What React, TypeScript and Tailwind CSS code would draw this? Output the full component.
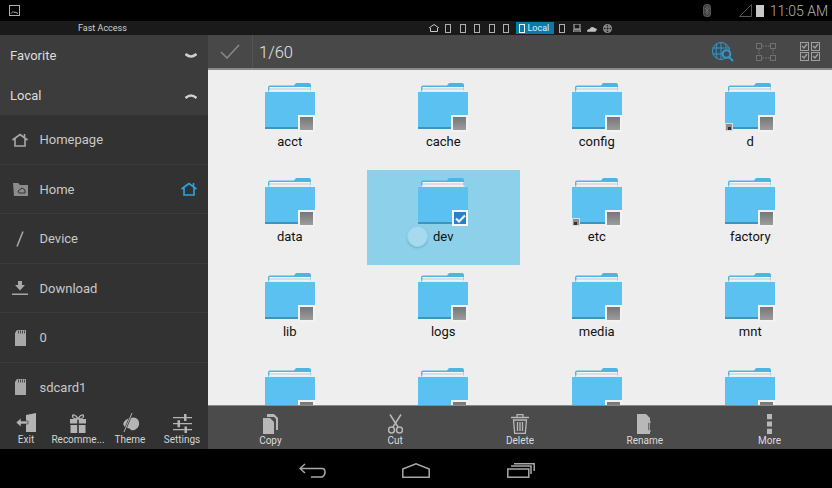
import React from 'react';

const font = { fontFamily: 'Roboto, "Liberation Sans", sans-serif' };

function FolderIcon({ selected, link }: { selected?: boolean; link?: boolean }) {
    return (
        <div className="relative w-[50px] h-[50px]">
            <svg width="50" height="47" viewBox="0 0 50 47">
                <path d="M3 12V5.500q0-2 2-2h24l2-2.500h13q2 0 2 2v9.500z" fill="#4fb4e0" />
                <rect x="4.500" y="5" width="41" height="4" fill="#f6f8f8" />
                <rect x="4.500" y="6.500" width="41" height="1" fill="#b9c6cc" />
                <rect x="3.500" y="8.500" width="43" height="1.500" fill="#e8eeee" />
                <path d="M0 10h50v35a1 1 0 0 1-1 1H1a1 1 0 0 1-1-1z" fill="#5ac1f0" />
                <rect x="0" y="45" width="50" height="2" fill="#3d94bd" />
            </svg>
            {selected ? (
                <div className="absolute right-0 bottom-[1px] w-[16px] h-[16px] border-2 border-[#f4f8fa] bg-[#2c7fcf] flex items-center justify-center">
                    <svg width="11" height="9" viewBox="0 0 11 9">
                        <path d="M1 4.500l3 3 6-6" stroke="#e8f2fa" strokeWidth="2.200" fill="none" />
                    </svg>
                </div>
            ) : (
                <div className="absolute right-0 bottom-0 w-[17px] h-[17px] border-2 border-[#f2f2f2] bg-gradient-to-b from-[#777777] to-[#9c9c9c]" />
            )}
            {link && (
                <div className="absolute left-0 bottom-[1px] w-[8px] h-[8px] bg-[#8f8f8f] border border-[#dddddd] flex items-end justify-center">
                    <div className="w-[3px] h-[3px] bg-[#333333]" />
                </div>
            )}
        </div>
    );
}

// the last row is cut by the toolbar, so it has no visible names
const files: { name: string; link?: boolean; selected?: boolean }[] = [
    { name: 'acct' },
    { name: 'cache' },
    { name: 'config' },
    { name: 'd', link: true },
    { name: 'data' },
    { name: 'dev', selected: true },
    { name: 'etc', link: true },
    { name: 'factory' },
    { name: 'lib' },
    { name: 'logs' },
    { name: 'media' },
    { name: 'mnt' },
    { name: '' },
    { name: '' },
    { name: '' },
    { name: '' },
];

function HouseIcon({ color = '#a8a8a8' }: { color?: string }) {
    return (
        <svg width="16" height="14" viewBox="0 0 16 14" fill="none" stroke={color} strokeWidth="1.6">
            <path d="M0.5 7L8 1.5 15.5 7M3 6v7h10V6M12.5 1v3" />
        </svg>
    );
}

function SdIcon() {
    return (
        <svg width="11" height="16" viewBox="0 0 11 16">
            <path d="M2 0h9v16H0V3z" fill="#a8a8a8" />
            <path d="M3.500 0.500v3M5.500 0.500v3M7.500 0.500v3M9.500 0.500v3" stroke="#333" strokeWidth="0.8" />
        </svg>
    );
}

const navItems: { label: string; icon: React.ReactNode; extra?: boolean }[] = [
    { label: 'Homepage', icon: <HouseIcon /> },
    {
        label: 'Home',
        extra: true,
        icon: (
            <svg width="15" height="13" viewBox="0 0 15 13">
                <path d="M0 0h5l2 2h8v11H1z" fill="#8c8c8c" />
                <path d="M5 8l4-3 3 2v3H6z" fill="none" stroke="#333" strokeWidth="1" />
            </svg>
        ),
    },
    {
        label: 'Device',
        icon: (
            <svg width="10" height="16" viewBox="0 0 10 16">
                <path d="M8 0.5L2 15.5" stroke="#a8a8a8" strokeWidth="1.5" />
            </svg>
        ),
    },
    {
        label: 'Download',
        icon: (
            <svg width="16" height="14" viewBox="0 0 16 14">
                <path d="M6 0h4v4h3L8 9.5 3 4h3zM0 12.500h16V14H0z" fill="#a8a8a8" />
            </svg>
        ),
    },
    { label: '0', icon: <SdIcon /> },
    { label: 'sdcard1', icon: <SdIcon /> },
];

const sideActions: { label: string; icon: React.ReactNode }[] = [
    {
        label: 'Exit',
        icon: (
            <svg width="21" height="20" viewBox="0 0 21 20">
                <path d="M10 2l10-2v19H10z" fill="#b4b4b4" />
                <path d="M0 9.500L5 5v3h7v3H5v3z" fill="#b4b4b4" stroke="#333" strokeWidth="0.6" />
            </svg>
        ),
    },
    {
        label: 'Recomme...',
        icon: (
            <svg width="18" height="20" viewBox="0 0 18 20">
                <path d="M1 6h7.200v4.500H1zM9.800 6H17v4.500H9.800zM1.500 12h6.700v8H1.500zM9.800 12h6.700v8H9.800z" fill="#b4b4b4" />
                <path d="M9 6C6 0.500 2 1 4 4.500 5 6 9 6 9 6c3-5.500 7-5 5-1.500C13 6 9 6 9 6z" fill="none" stroke="#b4b4b4" strokeWidth="1.3" />
            </svg>
        ),
    },
    {
        label: 'Theme',
        icon: (
            <svg width="19" height="20" viewBox="0 0 19 20">
                <path d="M9 5c6-2 10 2 9 7-1 4-5 6-8 5-1-2-4-2-6-3-4-3 0-8 5-9z" fill="#b4b4b4" />
                <path d="M11 0L3 19" stroke="#333" strokeWidth="2.2" />
                <path d="M11 0L3 19" stroke="#b4b4b4" strokeWidth="1" />
            </svg>
        ),
    },
    {
        label: 'Settings',
        icon: (
            <svg width="19" height="19" viewBox="0 0 19 19" fill="#b4b4b4">
                <path d="M0 3h19v1.300H0zM0 9h19v1.300H0zM0 15h19v1.300H0z" />
                <path d="M11 0h2.500v7H11zM4.500 6.200H7v7H4.500zM11.500 12.500H14V19h-2.500z" />
            </svg>
        ),
    },
];

const mainActions: { label: string; icon: React.ReactNode }[] = [
    {
        label: 'Copy',
        icon: (
            <svg width="15" height="20" viewBox="0 0 15 20" fill="#b8b8b8">
                <path d="M4 0h7l4 4v12h-2V5l-2-2H4z" />
                <path d="M0 4h7l4 4v12H0z" />
            </svg>
        ),
    },
    {
        label: 'Cut',
        icon: (
            <svg width="15" height="20" viewBox="0 0 15 20" fill="none" stroke="#b8b8b8" strokeWidth="1.5">
                <path d="M2 0.500L10 13M13 0.500L5 13" />
                <circle cx="3.500" cy="16" r="3" />
                <circle cx="11.500" cy="16" r="3" />
            </svg>
        ),
    },
    {
        label: 'Delete',
        icon: (
            <svg width="18" height="20" viewBox="0 0 18 20" fill="none" stroke="#b8b8b8" strokeWidth="1.3">
                <path d="M0 3.500h18M6 3V0.700h6V3" />
                <path d="M2.500 6h13l-1.200 13.400H3.700zM6.500 8v9M9 8v9M11.500 8v9" />
            </svg>
        ),
    },
    {
        label: 'Rename',
        icon: (
            <svg width="15" height="20" viewBox="0 0 15 20">
                <path d="M0 0h9l4 4v4.500H11v8h2V20H0z" fill="#b8b8b8" />
                <path d="M10.500 8h3.500M10.500 17h3.500M12.200 8v9" stroke="#b8b8b8" strokeWidth="1.1" />
            </svg>
        ),
    },
    {
        label: 'More',
        icon: (
            <svg width="5" height="20" viewBox="0 0 5 20" fill="#b8b8b8">
                <path d="M0 0h5v5.200H0zM0 7.400h5v5.200H0zM0 14.800h5V20H0z" />
            </svg>
        ),
    },
];

function TabRect({ light }: { light?: boolean }) {
    return <div className={`w-[6px] h-[9px] border ${light ? 'border-white' : 'border-[#b0b0b0]'}`} />;
}

function CheckBoxes() {
    return (
        <svg width="20" height="19" viewBox="0 0 20 19" fill="none" stroke="#a0a0a0" strokeWidth="1">
            <rect x="0.500" y="0.500" width="8" height="8" />
            <rect x="11.500" y="0.500" width="8" height="8" />
            <rect x="0.500" y="10.500" width="8" height="8" />
            <rect x="11.500" y="10.500" width="8" height="8" />
            <path d="M2 4l2 2 3-4M13 4l2 2 3-4M2 14l2 2 3-4M13 14l2 2 3-4" strokeWidth="1.3" />
        </svg>
    );
}

export default function App() {
    return (
        <div className="w-[832px] h-[488px] flex flex-col bg-black overflow-hidden" style={font}>
            {/* status bar */}
            <div className="h-[21px] shrink-0 flex items-center pl-[9px] pr-[4px] text-[#b4b4b4]">
                <svg width="12" height="12" viewBox="0 0 12 12" fill="none" stroke="#b0b0b0">
                    <rect x="0.500" y="0.500" width="10" height="10" />
                    <path d="M2 8.500l2-2 1 1 1-.5 3 1.500" />
                </svg>
                <svg className="ml-auto" width="8" height="13" viewBox="0 0 8 13" fill="none" stroke="#555" strokeWidth="1.2">
                    <rect x="0.600" y="0.600" width="6.800" height="11.800" rx="3" fill="#3c3c3c" />
                    <path d="M2 4l4 4.500L4 10.500V2.500L6 4.500 2 9" stroke="#777" strokeWidth="0.8" />
                </svg>
                <svg className="ml-[28px]" width="13" height="13" viewBox="0 0 13 13">
                    <path d="M12.500 0.500v12H0.500z" fill="none" stroke="#555" />
                </svg>
                <div className="ml-[4px] w-[8px] h-[12px] bg-[#c8c8c8]" />
                <span className="ml-[6px] text-[14px] font-light leading-none">11:05 AM</span>
            </div>

            {/* fast access */}
            <div className="h-[14px] shrink-0 bg-[#1a1a1a] flex items-center text-[#d0d0d0]">
                <span className="ml-[78px] text-[9px] leading-none w-[351px]">Fast Access</span>
                <svg width="10" height="8" viewBox="0 0 10 8" fill="none" stroke="#c8c8c8">
                    <path d="M0 4l5-3.500L10 4M1.500 4v3.500h7V4" />
                </svg>
                <div className="ml-[6px] flex items-center gap-[8.500px]">
                    <TabRect />
                    <TabRect />
                    <TabRect />
                    <TabRect />
                    <TabRect />
                </div>
                <div className="ml-[6.500px] h-[12px] w-[38px] bg-[#0a7ba6] flex items-center pl-[3px] gap-[3px] text-[9px] leading-none text-[#e0f0f8]">
                    <TabRect light />
                    Local
                </div>
                <div className="ml-[5px]">
                    <TabRect />
                </div>
                <svg className="ml-[8px]" width="8" height="8" viewBox="0 0 8 8">
                    <path d="M1 0h6v5H1zM0 6h8v2H0z" fill="none" stroke="#b8b8b8" />
                </svg>
                <svg className="ml-[6px]" width="10" height="7" viewBox="0 0 11 7">
                    <path d="M0 7q0-3 3-3 1-3 4-2 2 1 4 2-1 3-2 3z" fill="#c0c0c0" />
                </svg>
                <svg className="ml-[6px]" width="9" height="9" viewBox="0 0 9 9" fill="none" stroke="#b8b8b8" strokeWidth="0.8">
                    <circle cx="4.500" cy="4.500" r="4" />
                    <path d="M0.500 3h8M0.500 6h8M3 0.500v8M6 0.500v8" />
                </svg>
            </div>

            <div className="flex-1 flex min-h-0">
                {/* sidebar */}
                <aside className="w-[208px] shrink-0 flex flex-col bg-[#323232]">
                    <div className="bg-[#3c3c3c] shrink-0 text-[#dcdcdc] text-[13px]">
                        {['Favorite', 'Local'].map((t, i) => (
                            <div key={t} className="h-[40px] pt-[2px] flex items-center justify-between pl-[10px] pr-[11px]">
                                {t}
                                <svg width="12" height="6" viewBox="0 0 12 6" fill="none" stroke="#d0d0d0" strokeWidth="2.4">
                                    <path d={i === 0 ? 'M0.500 1q5.500 5 11 0' : 'M0.500 5q5.500-5 11 0'} />
                                </svg>
                            </div>
                        ))}
                    </div>
                    <div className="flex-1 min-h-0 overflow-hidden">
                        {navItems.map(item => (
                            <div key={item.label} className="h-[49.500px] pt-[1px] flex items-center border-b border-[#3c3c3c] text-[13px] text-[#c8c8c8]">
                                <div className="w-[39.500px] flex justify-center pl-[1px] shrink-0">{item.icon}</div>
                                <span>{item.label}</span>
                                {item.extra && (
                                    <div className="ml-auto mr-[11px]">
                                        <HouseIcon color="#2ba6dc" />
                                    </div>
                                )}
                            </div>
                        ))}
                    </div>
                    <div className="h-[44px] shrink-0 grid grid-cols-4 bg-[#323232]">
                        {sideActions.map(a => (
                            <div key={a.label} className="flex flex-col items-center pt-[8px]">
                                <div className="h-[20px] flex items-center">{a.icon}</div>
                                <span className="text-[10px] leading-none mt-[2px] text-[#d4d4d4] whitespace-nowrap">{a.label}</span>
                            </div>
                        ))}
                    </div>
                </aside>

                {/* main */}
                <main className="flex-1 min-w-0 flex flex-col">
                    <div className="h-[35px] shrink-0 bg-[#484848] border-b-2 border-[#8a8a8a] flex items-center">
                        <div className="w-[45px] h-full flex items-center justify-center border-r border-[#555555]">
                            <svg width="20" height="15" viewBox="0 0 20 15" fill="none" stroke="#8a8a8a" strokeWidth="1.5">
                                <path d="M1 8l6 6L19 1" />
                            </svg>
                        </div>
                        <span className="ml-[6px] pt-[3px] text-[16.500px] text-[#e4e4e4] font-light">1/60</span>
                        <div className="ml-auto flex items-center gap-[24px] pr-[12px]">
                            <svg className="translate-x-[2px]" width="22" height="20" viewBox="0 0 22 20" fill="none" stroke="#2a9bd0" strokeWidth="1">
                                <circle cx="9" cy="9" r="8.500" />
                                <path d="M0.500 6h17M0.500 12h10M5 1.500q-2 7 0 15M13 1.500q1 2 1 4M9 0.500v17" />
                                <circle cx="14.500" cy="12" r="3.800" fill="#484848" strokeWidth="2" />
                                <path d="M17 15l4 4" strokeWidth="2" />
                            </svg>
                            <svg width="20" height="18" viewBox="0 0 20 18" fill="none" stroke="#707070" strokeWidth="1">
                                <rect x="0.500" y="0.500" width="5" height="5" />
                                <rect x="14.500" y="0.500" width="5" height="5" />
                                <rect x="0.500" y="12.500" width="5" height="5" />
                                <rect x="14.500" y="12.500" width="5" height="5" />
                                <path d="M6 3h8M3 6v6M17 6v6M6 15h8" strokeDasharray="2 1" />
                            </svg>
                            <CheckBoxes />
                        </div>
                    </div>

                    <div className="flex-1 min-h-0 overflow-hidden bg-[#eeeeee] pl-[5px] pt-[5px] relative">
                        <div className="grid grid-cols-[repeat(4,153.500px)] auto-rows-[95px]">
                            {files.map((f, idx) => (
                                <div key={idx} className={`relative flex flex-col items-center pt-[7px] ${f.selected ? 'bg-[#8dd0ea]' : ''}`}>
                                    <FolderIcon selected={f.selected} link={f.link} />
                                    {f.name && <span className="text-[13px] leading-none mt-[3px] text-[#111111]">{f.name}</span>}
                                    {f.selected && (
                                        <div className="absolute left-[40px] top-[56px] w-[21px] h-[21px] rounded-full bg-[#a6dbef] border border-[#9bd3e9] shadow-[0_1px_2px_rgba(80,140,170,0.5)]" />
                                    )}
                                </div>
                            ))}
                        </div>
                    </div>

                    <div className="h-[44px] shrink-0 bg-[#4b4b4b] border-t border-[#8a8a8a] grid grid-cols-5">
                        {mainActions.map(a => (
                            <div key={a.label} className="flex flex-col items-center pt-[8px]">
                                <div className="h-[20px] flex items-center">{a.icon}</div>
                                <span className="text-[10px] leading-none mt-[2px] text-[#dcdcdc]">{a.label}</span>
                            </div>
                        ))}
                    </div>
                </main>
            </div>

            {/* nav bar */}
            <div className="h-[39px] shrink-0 flex items-center pl-[299px] pt-[3px]">
                <svg width="27" height="15" viewBox="0 0 27 15" fill="none" stroke="#a8a8a8" strokeWidth="1.5">
                    <path d="M6 1L1 5.500 6 10M1 5.500h22q3 0 3 3.500t-3 5H12" />
                </svg>
                <svg className="ml-[76px]" width="28" height="15" viewBox="0 0 28 15" fill="none" stroke="#a8a8a8" strokeWidth="1.5">
                    <path d="M0.800 6L14 0.800 27.200 6v8.200H0.800z" />
                </svg>
                <svg className="ml-[77px]" width="28" height="15" viewBox="0 0 28 15" fill="none" stroke="#a8a8a8" strokeWidth="1.5">
                    <rect x="0.800" y="6" width="21" height="8.200" />
                    <path d="M4 3h20v8M7 0.800h20.200V8" />
                </svg>
            </div>
        </div>
    );
}
